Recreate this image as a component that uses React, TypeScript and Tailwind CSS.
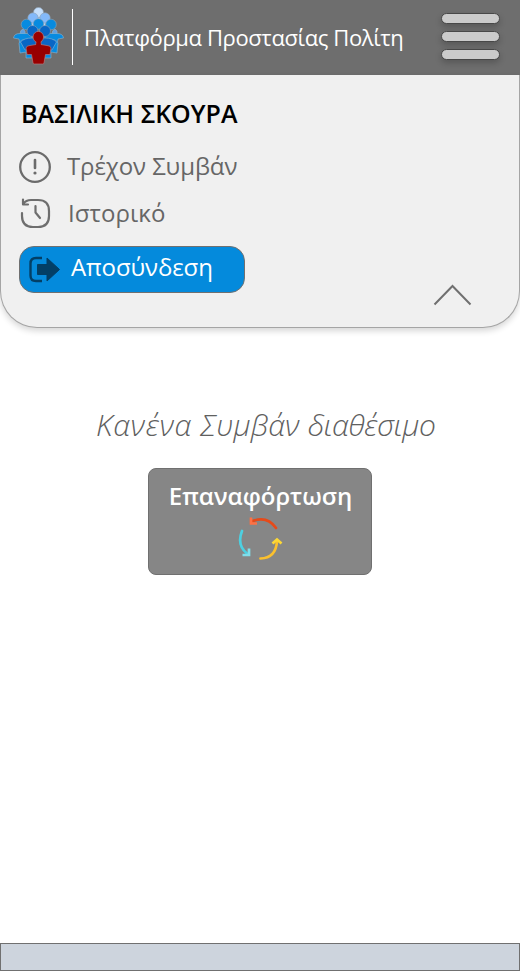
import React from "react";

function Person({ x, y, r, fill }: { x: number; y: number; r: number; fill: string }) {
  return <circle cx={x} cy={y} r={r} fill={fill} stroke="#8fa3b5" strokeWidth="0.6" />;
}

function Logo() {
  return (
    <svg className="ml-[13px] h-[60px] w-[51px] shrink-0" viewBox="13 6 51 60">
      <g stroke="#8fb3cf" strokeWidth="0.6">
        <path d="M20 34Q20 30 23 29Q26 31 25 34ZM52 34Q52 30 55 29Q58 31 57 34Z" fill="#5f9fe0" />
        <path d="M31 21Q33 17 38.500 17Q44 17 46 21L45 27H32Z" fill="#bcdcff" />
        <path d="M13.500 38Q14 33.500 20 33.500H32V45H20L19 39ZM63.500 38Q63 33.500 57 33.500H45V45H57L58 39Z" fill="#078be0" />
        <path d="M19 43Q21 39 26 40H34V58H26V52L20 53ZM58 43Q56 39 51 40H43V58H51V52L57 53Z" fill="#078be0" />
        <path d="M20.500 42Q24 38 32 38H45Q53 38 56.500 42L52 50H25Z" fill="#0866c5" />
      </g>
      <Person x={38.5} y={12.5} r={5} fill="#c5dffc" />
      <Person x={33} y={18} r={5.2} fill="#83b9fa" />
      <Person x={45} y={18} r={5.2} fill="#83b9fa" />
      <Person x={26.5} y={24.5} r={5.3} fill="#078be0" />
      <Person x={38.5} y={24} r={5.3} fill="#078be0" />
      <Person x={51} y={24.5} r={5.3} fill="#078be0" />
      <Person x={32.5} y={31} r={5.5} fill="#0866c5" />
      <Person x={45} y={31} r={5.5} fill="#0866c5" />
      <g fill="#980000" stroke="#b07c80" strokeWidth="0.7">
        <path d="M26 48Q26.500 45.500 30 45.500L36 44.500V41H41V44.500L47 45.500Q50.500 45.500 51 48L50 54.500H45.500L44 63Q43.800 64 42.500 64H34.500Q33.200 64 33 63L31.500 54.500H27Z" />
        <ellipse cx="38.300" cy="37" rx="5.300" ry="5.600" />
        <path d="M36.500 41h4v5h-4z" stroke="none" />
      </g>
    </svg>
  );
}

function Bar() {
  return <span className="h-[11px] w-[59px] rounded-full border border-[#484848] bg-[#cbcbcb] shadow-[0_3px_6px_rgba(0,0,0,0.2)]" />;
}

export default function App() {
  return (
    <div className="flex h-[971px] w-[520px] flex-col overflow-hidden bg-white font-['Open_Sans','Noto_Sans',sans-serif] text-[#666666]">
      <header className="flex h-[75px] shrink-0 items-start bg-[#6e6e6e]">
        <div className="mt-[6px] flex">
          <Logo />
          <span className="ml-2 mt-[3px] h-[56px] w-px bg-white" />
        </div>
        <h1 className="ml-[11px] mt-[22px] w-[357px] whitespace-nowrap text-[22px] leading-[30px] tracking-[-0.37px] text-white">Πλατφόρμα Προστασίας Πολίτη</h1>
        <button aria-label="Μενού" className="mt-[13px] flex w-[59px] flex-col gap-[7px]">
          <Bar /><Bar /><Bar />
        </button>
      </header>
      <section className="h-[253px] shrink-0 rounded-b-[37px] border border-t-0 border-[#a5a5a5] bg-[#f0f0f0] shadow-[0_3px_6px_rgba(0,0,0,0.16)]">
        <h2 className="ml-[20px] pt-[21px] whitespace-nowrap text-[25px] font-semibold leading-[34px] text-black">ΒΑΣΙΛΙΚΗ ΣΚΟΥΡΑ</h2>
        <div className="ml-[17px] mt-[20px] flex h-[34px] items-center">
          <svg className="h-[34px] w-[34px]" viewBox="0 0 34 34" fill="none" stroke="#6b6b6b" strokeWidth="2.300">
            <circle cx="17" cy="17" r="14.800" />
            <path d="M17 10v8" strokeLinecap="round" strokeWidth="2.600" />
            <circle cx="17" cy="23" r="1.600" fill="#6b6b6b" stroke="none" />
          </svg>
          <span className="-mt-[2px] ml-[15px] whitespace-nowrap text-2xl leading-[34px] tracking-[-0.1px]">Τρέχον Συμβάν</span>
        </div>
        <div className="ml-[17px] mt-[13px] flex h-[34px] items-center">
          <svg className="h-[34px] w-[34px]" viewBox="18 197 34 34" fill="none" stroke="#6e6e6e" strokeWidth="2.200" strokeLinecap="round" strokeLinejoin="round">
            <path d="M22 213V216Q22 227 33 227H38Q49 227 49 216V211Q49 200 38 200H31Q26 200 23 204M23 199.500V204.500H28M35.500 206V212.500L40 218" />
          </svg>
          <span className="-mt-[2px] ml-[16px] whitespace-nowrap text-2xl leading-[34px] tracking-[0.1px]">Ιστορικό</span>
        </div>
        <div className="mt-[15px] flex">
          <button className="ml-[18px] flex h-[47px] w-[226px] items-start rounded-[15px] border border-[#707070] bg-[#048adc] pl-[8px] text-white">
            <svg className="mt-[8px] h-[30px] w-[34px]" viewBox="28 255 34 30">
              <path d="M42 258H36Q30.500 258 30.500 263.500V275.500Q30.500 281 36 281H42" fill="none" stroke="#033f66" strokeWidth="2.400" />
              <path d="M37.500 264.500H47V258L59.500 269.500L47 281V274.500H37.500Z" fill="#033f66" stroke="#033f66" strokeLinejoin="round" />
            </svg>
            <span className="ml-[9px] mt-[3px] whitespace-nowrap text-2xl leading-[34px] tracking-[-0.1px]">Αποσύνδεση</span>
          </button>
          <svg className="ml-[186px] mt-[36px] h-[25px] w-[42px]" viewBox="0 0 42 25"><path d="M3.500 22.500L21.500 4L39.500 22.500" fill="none" stroke="#707070" strokeWidth="2" /></svg>
        </div>
      </section>
      <main className="flex grow flex-col items-center">
        <p className="mt-[76px] w-[328px] whitespace-nowrap text-[30px] font-light italic leading-[42px] text-[#606060]">
          <span className="tracking-[0.7px]">Κανένα </span>
          <span className="tracking-[0.15px]">Συμβάν </span>
          <span className="tracking-[-0.3px]">διαθέσιμο</span>
        </p>
        <button className="mt-[22px] flex h-[107px] w-[224px] flex-col items-center rounded-[8px] border border-[#707070] bg-[#868686] text-white">
          <span className="ml-px mt-[10px] whitespace-nowrap text-2xl font-semibold leading-[34px]">Επαναφόρτωση</span>
          <svg className="mt-[3px] h-[46px] w-[46px]" viewBox="237 516 46 46" fill="none" strokeWidth="2.700" strokeLinejoin="miter">
            <path d="M251.500 521.500Q267 515 276 528" stroke="#e64a19" strokeLinecap="round" />
            <path d="M251 517.500V523.500H257" stroke="#ff7043" />
            <path d="M242 531Q236.500 545 247 553.500" stroke="#4dd0e1" strokeLinecap="round" />
            <path d="M249 548.500V555H242.500" stroke="#80deea" />
            <path d="M260.500 558.500Q276 558 277 541" stroke="#fbc02d" strokeLinecap="round" />
            <path d="M272.500 543.500L277 539.500L281.500 543.500" stroke="#fdd835" />
          </svg>
        </button>
      </main>
      <footer className="h-[28px] shrink-0 border border-[#707070] bg-[#cdd4dd]" />
    </div>
  );
}
